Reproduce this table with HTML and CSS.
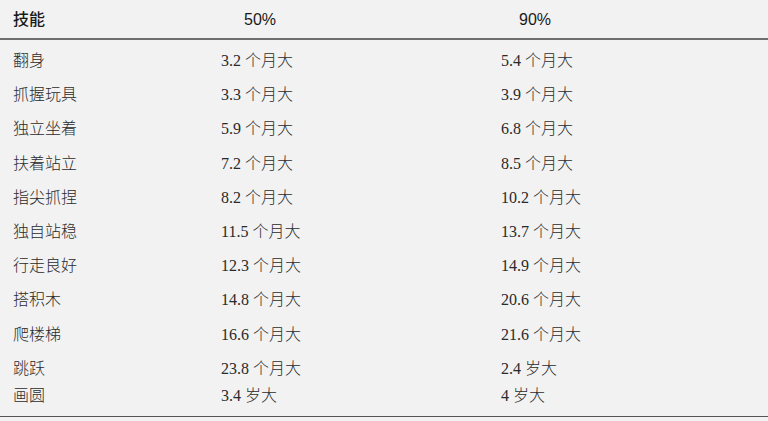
FILE: index.html
```html
<!DOCTYPE html>
<html lang="zh">
<head>
<meta charset="utf-8">
<link rel="stylesheet" href="styles.css">
</head>
<body>
<div class="table">
  <div class="row head">
    <div class="cell c1">技能</div>
    <div class="cell c2 h2">50%</div>
    <div class="cell c3 h3">90%</div>
  </div>
  <div class="body">
    <div class="row"><div class="cell c1">翻身</div><div class="cell c2">3.2 个月大</div><div class="cell c3">5.4 个月大</div></div>
    <div class="row"><div class="cell c1">抓握玩具</div><div class="cell c2">3.3 个月大</div><div class="cell c3">3.9 个月大</div></div>
    <div class="row"><div class="cell c1">独立坐着</div><div class="cell c2">5.9 个月大</div><div class="cell c3">6.8 个月大</div></div>
    <div class="row"><div class="cell c1">扶着站立</div><div class="cell c2">7.2 个月大</div><div class="cell c3">8.5 个月大</div></div>
    <div class="row"><div class="cell c1">指尖抓捏</div><div class="cell c2">8.2 个月大</div><div class="cell c3">10.2 个月大</div></div>
    <div class="row"><div class="cell c1">独自站稳</div><div class="cell c2">11.5 个月大</div><div class="cell c3">13.7 个月大</div></div>
    <div class="row"><div class="cell c1">行走良好</div><div class="cell c2">12.3 个月大</div><div class="cell c3">14.9 个月大</div></div>
    <div class="row"><div class="cell c1">搭积木</div><div class="cell c2">14.8 个月大</div><div class="cell c3">20.6 个月大</div></div>
    <div class="row"><div class="cell c1">爬楼梯</div><div class="cell c2">16.6 个月大</div><div class="cell c3">21.6 个月大</div></div>
    <div class="row"><div class="cell c1">跳跃</div><div class="cell c2">23.8 个月大</div><div class="cell c3">2.4 岁大</div></div>
    <div class="row last"><div class="cell c1">画圆</div><div class="cell c2">3.4 岁大</div><div class="cell c3">4 岁大</div></div>
  </div>
</div>
</body>
</html>
```
FILE: styles.css
```css
html, body {
  margin: 0;
  padding: 0;
  background: #f2f2f2;
}
body {
  width: 768px;
  height: 421px;
  overflow: hidden;
}
.table {
  display: flex;
  flex-direction: column;
  border-bottom: 1px solid #555;
}
.row {
  display: grid;
  grid-template-columns: 208px 280px 1fr;
  line-height: 20px;
  padding: 7.1px 0;
  font-family: "Liberation Serif", "Noto Sans CJK SC", serif;
  font-size: 16px;
  font-weight: 300;
  color: #2a2a2a;
}
.row .cell {
  padding-left: 13px;
  white-space: nowrap;
}
.head {
  padding: 10px 0 8px;
  font-family: "Liberation Sans", "Noto Sans CJK SC", sans-serif;
  color: #1a1a1a;
  border-bottom: 2px solid #6e6e6e;
}
.head .cell {
  font-family: "Liberation Sans", "Noto Sans CJK SC", sans-serif;
  font-weight: 500;
}
.head .h2 {
  padding-left: 36px;
  font-weight: 400;
}
.head .h3 {
  padding-left: 31px;
  font-weight: 400;
}
.body {
  padding-top: 4px;
}
.row.last {
  padding: 0 0 10px;
}
```
